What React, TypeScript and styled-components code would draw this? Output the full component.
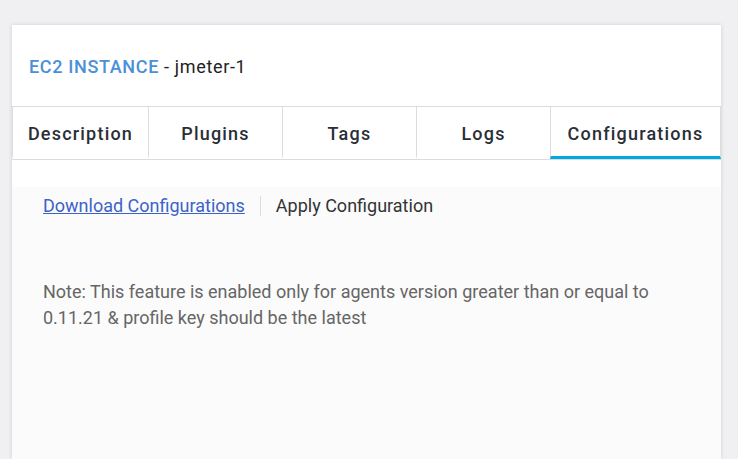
import React from "react";
import styled, { createGlobalStyle } from "styled-components";

const Global = createGlobalStyle`
  html, body { margin: 0; padding: 0; }
  body {
    background: #f0f0f2;
    font-family: Roboto, "Liberation Sans", sans-serif;
    width: 738px;
    height: 459px;
    overflow: hidden;
  }
`;

const Page = styled.div`
  padding: 25px 17px 0 12px;
  height: 459px;
  box-sizing: border-box;
`;

const Card = styled.div`
  background: #ffffff;
  box-shadow: 0 0 4px rgba(0, 0, 0, 0.14);
  height: 434px;
  display: flex;
  flex-direction: column;
`;

const Header = styled.div`
  padding: 31px 17px 29px;
  font-size: 18px;
  line-height: 21px;
  letter-spacing: 0.65px;
  color: #222;
`;

const Kind = styled.span`
  color: #4a90d9;
  font-weight: 500;
`;

const Tabs = styled.div`
  display: flex;
  border-top: 1px solid #dcdcdc;
  border-bottom: 1px solid #dcdcdc;
`;

const Tab = styled.div<{ $w: number; $active?: boolean }>`
  width: ${(p) => p.$w}px;
  height: 52px;
  box-sizing: border-box;
  border-left: 1px solid #dcdcdc;
  display: flex;
  align-items: center;
  justify-content: center;
  font-size: 18px;
  font-weight: 500;
  color: #2a2e36;
  letter-spacing: 1.2px;
  border-bottom: 3px solid ${(p) => (p.$active ? "#00aadd" : "transparent")};
  padding-top: 3px;
  &:last-child {
    border-right: 1px solid #dcdcdc;
  }
`;

const Gap = styled.div`
  height: 27px;
`;

const Content = styled.div`
  flex: 1;
  background: #fbfbfb;
  padding: 8px 31px 0;
`;

const Actions = styled.div`
  display: flex;
  align-items: center;
  font-size: 18px;
  line-height: 22px;
`;

const LinkAction = styled.a`
  color: #3b63c9;
  text-decoration: underline;
  cursor: pointer;
`;

const Divider = styled.span`
  width: 1px;
  height: 20px;
  background: #dddddd;
  margin: 0 15px;
`;

const PlainAction = styled.span`
  color: #333333;
`;

const Note = styled.p`
  margin: 62px 0 0;
  font-size: 18px;
  line-height: 26px;
  color: #666666;
  max-width: 640px;
`;

export default function App() {
  return (
    <>
      <Global />
      <Page>
        <Card>
          <Header>
            <Kind>EC2 INSTANCE</Kind> - jmeter-1
          </Header>
          <Tabs>
            <Tab $w={136}>Description</Tab>
            <Tab $w={134}>Plugins</Tab>
            <Tab $w={134}>Tags</Tab>
            <Tab $w={134}>Logs</Tab>
            <Tab $w={171} $active>Configurations</Tab>
          </Tabs>
          <Gap />
          <Content>
            <Actions>
              <LinkAction>Download Configurations</LinkAction>
              <Divider />
              <PlainAction>Apply Configuration</PlainAction>
            </Actions>
            <Note>
              Note: This feature is enabled only for agents version greater than or equal to
              0.11.21 &amp; profile key should be the latest
            </Note>
          </Content>
        </Card>
      </Page>
    </>
  );
}
